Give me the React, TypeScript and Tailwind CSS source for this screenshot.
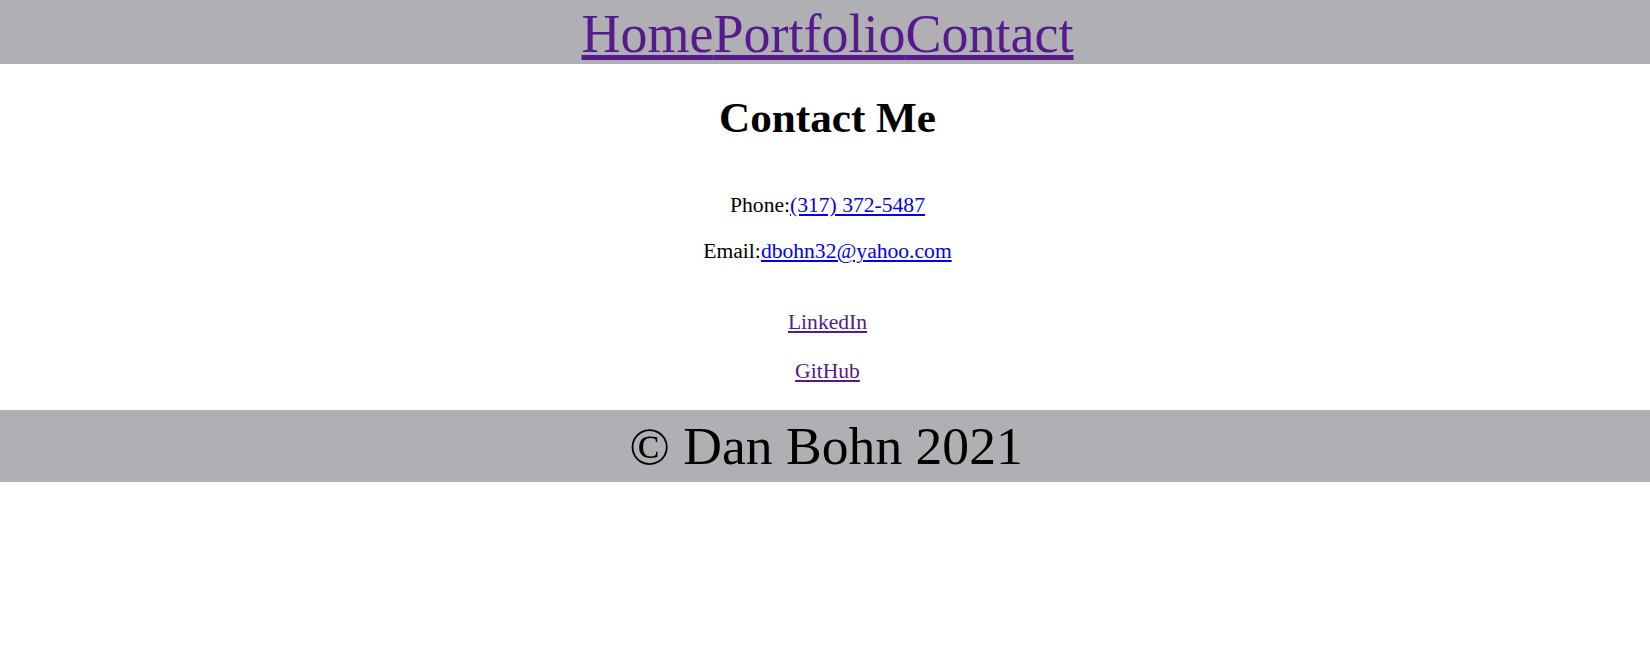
const serif = { fontFamily: '"Liberation Serif", "Times New Roman", serif' };

const navLinks = ["Home", "Portfolio", "Contact"];

export default function App(): JSX.Element {
  return (
    <div style={serif} className="min-h-[658px] bg-white text-black">
      <header className="h-[64px] bg-[#b0afb3] pt-[5px] pl-[5px] text-center text-[54px] leading-[58px]">
        {navLinks.map((name) => (
          <a key={name} href="#" className="text-[#551a8b] underline">
            {name}
          </a>
        ))}
      </header>

      <main className="pl-[5px] text-center">
        <h1 className="mt-[29px] text-[43.2px] font-bold leading-[49px]">
          Contact Me
        </h1>
        <p className="mt-[51px] text-[21.6px] leading-[24px]">
          Phone:
          <a href="#" className="text-[#0000ee] underline">
            (317) 372-5487
          </a>
        </p>
        <p className="mt-[22px] text-[21.6px] leading-[24px]">
          Email:
          <a href="#" className="text-[#0000ee] underline">
            dbohn32@yahoo.com
          </a>
        </p>
        <p className="mt-[47px] text-[21.6px] leading-[24px]">
          <a href="#" className="text-[#551a8b] underline">
            LinkedIn
          </a>
        </p>
        <p className="mt-[25px] text-[21.6px] leading-[24px]">
          <a href="#" className="text-[#551a8b] underline">
            GitHub
          </a>
        </p>
      </main>

      <footer className="mt-[27px] h-[72px] bg-[#b0afb3] pl-[2px] text-center text-[53.6px] leading-[72px]">
        © Dan Bohn 2021
      </footer>
    </div>
  );
}
